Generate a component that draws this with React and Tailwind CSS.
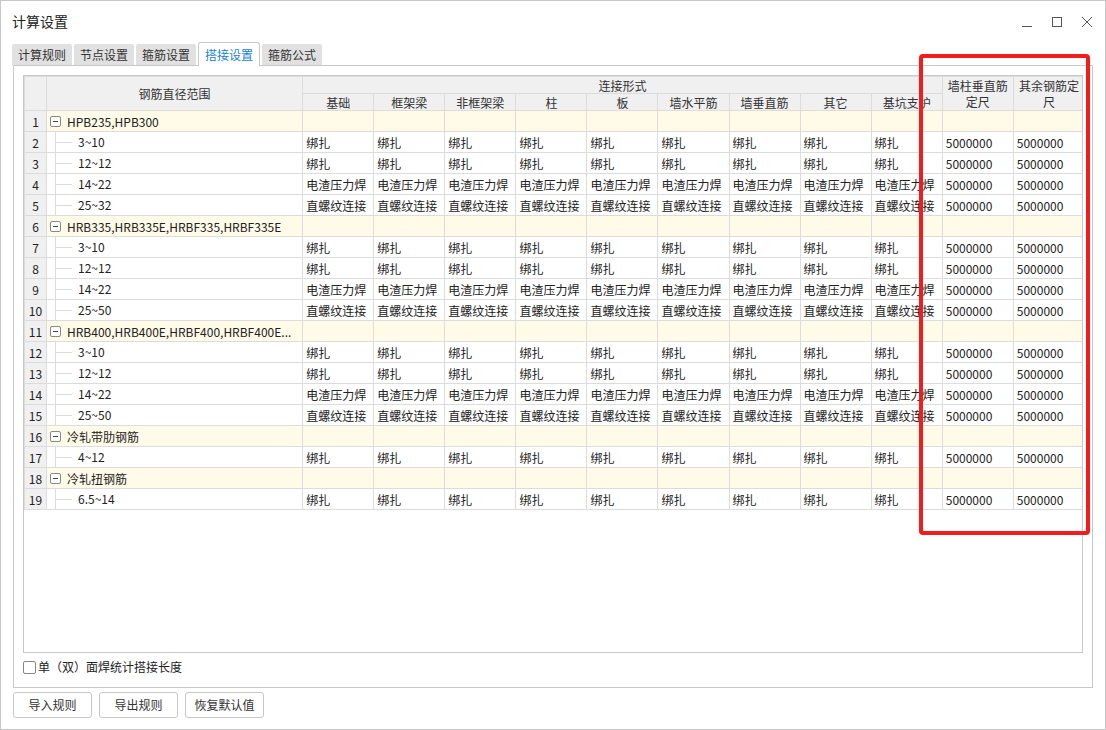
import React from "react";

const cols = ["基础", "框架梁", "非框架梁", "柱", "板", "墙水平筋", "墙垂直筋", "其它", "基坑支护"];
const groups = [
  { name: "HPB235,HPB300", kids: ["3~10", "12~12", "14~22", "25~32"], types: [0, 0, 1, 2] },
  { name: "HRB335,HRB335E,HRBF335,HRBF335E", kids: ["3~10", "12~12", "14~22", "25~50"], types: [0, 0, 1, 2] },
  { name: "HRB400,HRB400E,HRBF400,HRBF400E...", kids: ["3~10", "12~12", "14~22", "25~50"], types: [0, 0, 1, 2] },
  { name: "冷轧带肋钢筋", kids: ["4~12"], types: [0] },
  { name: "冷轧扭钢筋", kids: ["6.5~14"], types: [0] },
];
const typeText = ["绑扎", "电渣压力焊", "直螺纹连接"];

const cell = "border border-[#dcdcdc] h-[21px] leading-[19px] py-0 px-[3px] whitespace-nowrap overflow-hidden";

export default function App() {
  let n = 0;
  const rows = [];
  groups.forEach((g, gi) => {
    n += 1;
    rows.push(
      <tr key={"g" + gi} className="bg-[#fffbe8]">
        <td className={cell + " bg-[#f0f0f0] text-center"}>{n}</td>
        <td className={cell}>
          <div className="flex items-center gap-[6px]">
            <span className="w-[11px] h-[11px] border border-[#888] rounded-[2px] flex items-center justify-center bg-white">
              <span className="w-[5px] h-px bg-[#444]" />
            </span>
            <span>{g.name}</span>
          </div>
        </td>
        {cols.map((c) => (
          <td key={c} className={cell} />
        ))}
        <td className={cell} />
        <td className={cell} />
      </tr>
    );
    g.kids.forEach((k, ki) => {
      n += 1;
      rows.push(
        <tr key={"k" + gi + ki} className="bg-white">
          <td className={cell + " bg-[#f0f0f0] text-center"}>{n}</td>
          <td className={"border border-[#dcdcdc] h-[21px] p-0"}>
            <div className="flex items-center h-[20px]">
              <span className="w-[8px]" />
              <span className="w-px h-[20px] bg-[#dcdcdc]" />
              <span className="w-[16px] h-px bg-[#dcdcdc]" />
              <span className="ml-[6px]">{k}</span>
            </div>
          </td>
          {cols.map((c) => (
            <td key={c} className={cell}>{typeText[g.types[ki]]}</td>
          ))}
          <td className={cell}>5000000</td>
          <td className={cell}>5000000</td>
        </tr>
      );
    });
  });

  return (
    <div
      className="w-[1106px] h-[730px] bg-white border border-[#c8c8c8] relative text-[12px] text-[#222] flex flex-col"
      style={{ fontFamily: '"Noto Sans CJK SC", "Noto Sans", sans-serif' }}
    >
      <div className="h-[41px] flex items-center justify-between pl-[11px] pr-[12px]">
        <span className="text-[14px]">计算设置</span>
        <div className="flex items-center gap-[18px] text-[#555]">
          <svg width="12" height="12" viewBox="0 0 12 12"><path d="M1 10.5h10" stroke="#555" /></svg>
          <svg width="12" height="12" viewBox="0 0 12 12"><rect x="1.5" y="1.5" width="9" height="9" fill="none" stroke="#555" /></svg>
          <svg width="12" height="12" viewBox="0 0 12 12"><path d="M1 1l10 10M11 1L1 11" stroke="#555" /></svg>
        </div>
      </div>
      <div className="flex items-end pl-[11px] gap-[2px] h-[23px]">
        {["计算规则", "节点设置", "箍筋设置", "搭接设置", "箍筋公式"].map((t, i) =>
          i === 3 ? (
            <div key={t} className="h-[24px] px-[6px] flex items-center border border-b-0 border-[#c8c8c8] rounded-t-[3px] bg-white text-[#1a7fd6] -mb-px relative z-10">{t}</div>
          ) : (
            <div key={t} className="h-[21px] px-[6px] flex items-center bg-[#e1e1e1] rounded-t-[2px] text-[#333]">{t}</div>
          )
        )}
      </div>
      <div className="mx-[12px] border border-[#c8c8c8] h-[623px] flex flex-col px-[9px] pt-[9px]">
        <div className="border border-[#c8c8c8] h-[578px] overflow-hidden">
          <table className="table-fixed border-collapse w-[1061px]">
            <colgroup>
              <col className="w-[22px]" />
              <col className="w-[256px]" />
              {cols.map((c) => <col key={c} className="w-[71px]" />)}
              <col className="w-[71px]" />
              <col className="w-[71px]" />
            </colgroup>
            <thead className="bg-[#f0f0f0] text-[#333]">
              <tr>
                <th rowSpan={2} className="border border-[#dcdcdc] font-normal p-0" />
                <th rowSpan={2} className="border border-[#dcdcdc] font-normal p-0">钢筋直径范围</th>
                <th colSpan={9} className="border border-[#dcdcdc] font-normal h-[17px] leading-[15px] p-0">连接形式</th>
                <th rowSpan={2} className="border border-[#dcdcdc] font-normal leading-[16px] p-0">墙柱垂直筋<br />定尺</th>
                <th rowSpan={2} className="border border-[#dcdcdc] font-normal leading-[16px] p-0">其余钢筋定<br />尺</th>
              </tr>
              <tr>
                {cols.map((c) => (
                  <th key={c} className="border border-[#dcdcdc] font-normal h-[17px] leading-[15px] p-0 whitespace-nowrap overflow-hidden">{c}</th>
                ))}
              </tr>
            </thead>
            <tbody>{rows}</tbody>
          </table>
        </div>
        <label className="flex items-center gap-[2px] mt-[6px] h-[16px]">
          <span className="w-[13px] h-[13px] border border-[#888] rounded-[2px] bg-white" />
          <span>单（双）面焊统计搭接长度</span>
        </label>
      </div>
      <div className="flex gap-[7px] ml-[12px] mt-[4px]">
        {["导入规则", "导出规则", "恢复默认值"].map((b) => (
          <button key={b} className="h-[26px] w-[79px] border border-[#c8c8c8] rounded-[3px] bg-white text-[#333]">{b}</button>
        ))}
      </div>
      <div className="absolute left-[918px] top-[53px] w-[171px] h-[481px] border-[4px] border-[#f21c1c] rounded-[4px] pointer-events-none" />
    </div>
  );
}
